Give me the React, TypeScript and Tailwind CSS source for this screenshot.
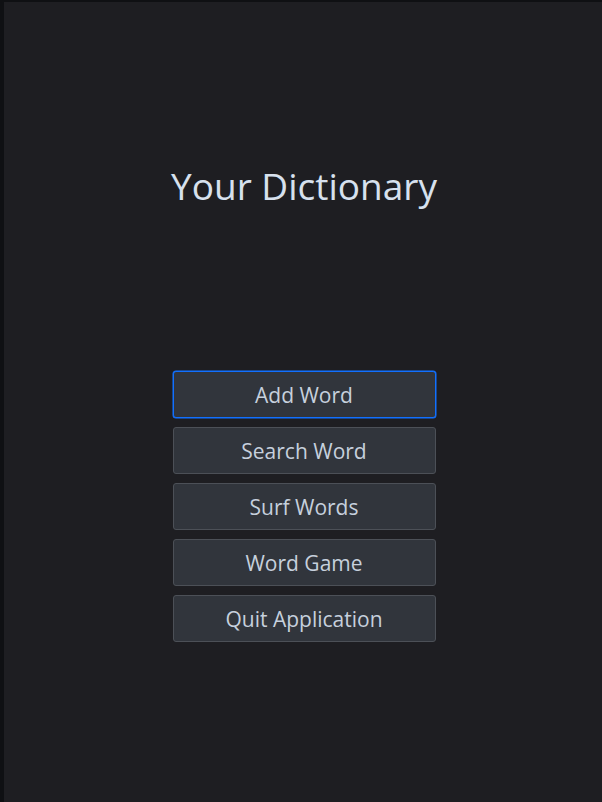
import React from "react";

const items = ["Add Word", "Search Word", "Surf Words", "Word Game", "Quit Application"];

export default function App() {
  return (
    <div className="w-[602px] h-[802px] bg-[#0f1013] pt-[2px] pl-[4px]" style={{ fontFamily: '"Open Sans", "Noto Sans", sans-serif' }}>
      <div className="w-full h-full bg-[#1e1e22] flex flex-col items-center">
        <h1 className="mt-[160px] ml-[2px] text-[37px] leading-[48px] text-[#d7e1ee]">Your Dictionary</h1>
        <div className="mt-[161px] ml-[2px] flex flex-col gap-[9px]">
          {items.map((t, i) => (
            <button
              key={t}
              className={
                i === 0
                  ? "w-[263px] h-[47px] pt-[2px] rounded-[3px] bg-[#31353c] text-[21px] text-[#c6d0dd] border border-solid border-[#1170ff] shadow-[0_0_0_0.5px_#1170ff]"
                  : "w-[263px] h-[47px] pt-[2px] rounded-[3px] bg-[#31353c] text-[21px] text-[#c6d0dd] border border-solid border-[#4c5057]"
              }
            >
              {t}
            </button>
          ))}
        </div>
      </div>
    </div>
  );
}
